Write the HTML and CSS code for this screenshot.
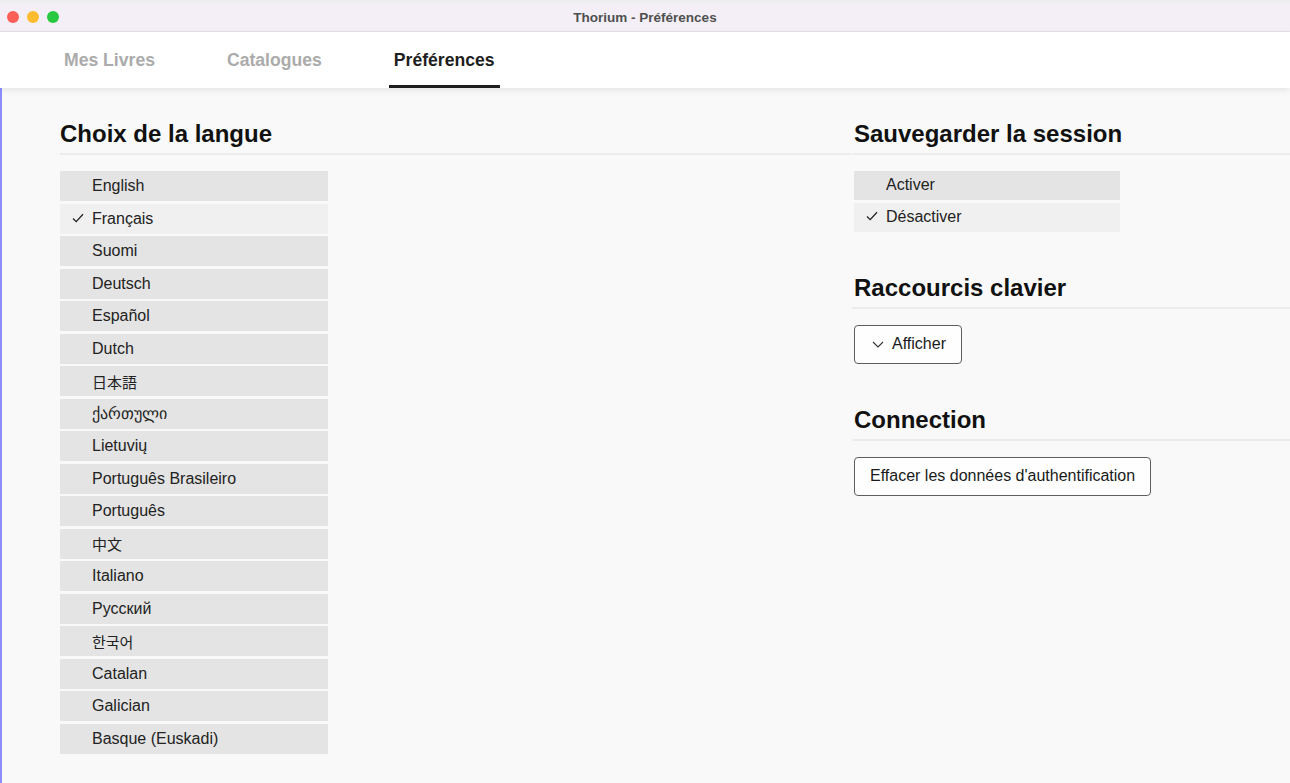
FILE: index.html
```html
<!DOCTYPE html>
<html lang="fr">
<head>
<meta charset="utf-8">
<title>Thorium - Préférences</title>
<link rel="stylesheet" href="styles.css">
</head>
<body>
<div class="window">
  <div class="topstrip"></div>
  <header class="titlebar">
    <div class="lights">
      <span class="light red"></span>
      <span class="light yellow"></span>
      <span class="light green"></span>
    </div>
    <div class="title">Thorium - Préférences</div>
  </header>
  <nav class="tabs">
    <a class="tab">Mes Livres</a>
    <a class="tab">Catalogues</a>
    <a class="tab active">Préférences</a>
  </nav>
  <main class="content">
    <section class="col-left">
      <h2 class="heading">Choix de la langue</h2>
      <ul class="options lang">
        <li class="opt">English</li>
        <li class="opt selected"><svg class="check" viewBox="0 0 12 10" width="12" height="10"><polyline points="1,5.5 4.2,8.6 11,1.2" fill="none" stroke="#222" stroke-width="1.3"/></svg>Français</li>
        <li class="opt">Suomi</li>
        <li class="opt">Deutsch</li>
        <li class="opt">Español</li>
        <li class="opt">Dutch</li>
        <li class="opt cjk">日本語</li>
        <li class="opt">ქართული</li>
        <li class="opt">Lietuvių</li>
        <li class="opt">Português Brasileiro</li>
        <li class="opt">Português</li>
        <li class="opt cjk">中文</li>
        <li class="opt">Italiano</li>
        <li class="opt">Русский</li>
        <li class="opt cjk">한국어</li>
        <li class="opt">Catalan</li>
        <li class="opt">Galician</li>
        <li class="opt">Basque (Euskadi)</li>
      </ul>
    </section>
    <section class="col-right">
      <div class="block">
        <h2 class="heading">Sauvegarder la session</h2>
        <ul class="options session">
          <li class="opt">Activer</li>
          <li class="opt selected"><svg class="check" viewBox="0 0 12 10" width="12" height="10"><polyline points="1,5.5 4.2,8.6 11,1.2" fill="none" stroke="#222" stroke-width="1.3"/></svg>Désactiver</li>
        </ul>
      </div>
      <div class="block">
        <h2 class="heading">Raccourcis clavier</h2>
        <button class="btn"><svg class="chev" viewBox="0 0 12 7" width="12" height="7"><polyline points="1,1 6,6 11,1" fill="none" stroke="#333" stroke-width="1.1"/></svg>Afficher</button>
      </div>
      <div class="block">
        <h2 class="heading">Connection</h2>
        <button class="btn">Effacer les données d'authentification</button>
      </div>
    </section>
  </main>
</div>
</body>
</html>
```
FILE: styles.css
```css
* { box-sizing: border-box; }
html, body {
  margin: 0;
  padding: 0;
  height: 100%;
}
body {
  font-family: "Liberation Sans", Arial, "Noto Sans CJK JP", sans-serif;
  color: #222;
  background: #f9f9f9;
  overflow: hidden;
}
.window {
  display: flex;
  flex-direction: column;
  height: 783px;
}
.topstrip {
  height: 3px;
  background: #eeeeee;
  flex: none;
}
.titlebar {
  flex: none;
  height: 29px;
  background: #f4eff6;
  border-bottom: 1px solid #e6e1e9;
  display: flex;
  align-items: center;
  position: relative;
}
.lights {
  display: flex;
  gap: 8px;
  padding-left: 7px;
  position: absolute;
  left: 0;
  top: 8px;
}
.light {
  width: 12px;
  height: 12px;
  border-radius: 50%;
  display: block;
}
.red { background: #ff5f57; }
.yellow { background: #febc2e; }
.green { background: #28c840; }
.title {
  flex: 1;
  text-align: center;
  font-weight: bold;
  font-size: 13.5px;
  color: #4f4f4f;
}
.tabs {
  flex: none;
  height: 56px;
  background: #ffffff;
  display: flex;
  align-items: stretch;
  padding-left: 59px;
  gap: 62px;
  position: relative;
  z-index: 2;
  box-shadow: 0 2px 7px rgba(0, 0, 0, 0.09);
}
.tab {
  font-size: 17.6px;
  font-weight: bold;
  color: #ababab;
  padding: 3px 5px 0 5px;
  display: flex;
  align-items: center;
  border-bottom: 3px solid transparent;
}
.tab.active {
  color: #1e1e1e;
  border-bottom-color: #1e1e1e;
}
.content {
  flex: 1;
  border-left: 2px solid #8c8cff;
  padding: 32px 0 0 58px;
  display: grid;
  grid-template-columns: 791px 1fr;
  column-gap: 3px;
  align-items: start;
}
.heading {
  margin: 0;
  font-size: 24px;
  line-height: 28px;
  font-weight: bold;
  color: #111;
  padding-bottom: 5px;
  border-bottom: 2px solid #ececec;
}
.col-right .heading {
  margin-left: -2px;
  padding-left: 2px;
}
.options {
  list-style: none;
  margin: 16px 0 0 0;
  padding: 0;
  display: flex;
  flex-direction: column;
}
.lang {
  width: 268px;
  gap: 2.5px;
}
.lang .opt { height: 30px; }
.session {
  width: 266px;
  gap: 3.5px;
}
.session .opt { height: 28.5px; }
.opt {
  background: #e4e4e4;
  font-size: 16px;
  display: flex;
  align-items: center;
  padding-left: 32px;
  position: relative;
  color: #222;
}
.opt.cjk {
  font-family: "Noto Sans CJK JP", "Liberation Sans", sans-serif;
  font-size: 15px;
}
.opt.selected { background: #f0f0f0; }
.check {
  position: absolute;
  left: 12px;
  top: 50%;
  margin-top: -6px;
}
.block + .block { margin-top: 42px; }
.btn {
  margin-top: 16px;
  height: 39px;
  padding: 0 15px;
  border: 1px solid #5e5e5e;
  border-radius: 4px;
  background: #fefefe;
  font-family: "Liberation Sans", Arial, sans-serif;
  font-size: 16px;
  color: #1a1a1a;
  display: flex;
  align-items: center;
  gap: 8px;
}
.chev { margin-left: 2px; }
```
